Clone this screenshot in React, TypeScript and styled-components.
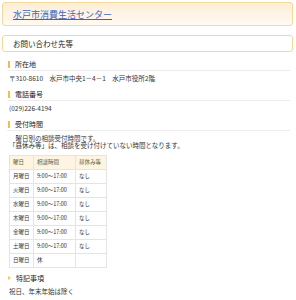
import React from "react";
import styled, { createGlobalStyle } from "styled-components";

const Global = createGlobalStyle`
  html, body { margin: 0; padding: 0; background: #fff; }
  body {
    font-family: "Noto Sans CJK JP", "Noto Sans", sans-serif;
    color: #333;
    -webkit-font-smoothing: antialiased;
  }
`;

const Page = styled.div`
  width: 296px;
  padding: 2px 3px 0 2px;
  box-sizing: border-box;
`;

const TitleBox = styled.header`
  height: 24px;
  box-sizing: border-box;
  border: 1px solid #f6d899;
  border-radius: 3px;
  background: linear-gradient(#fdeed6, #fffaf2);
  display: flex;
  align-items: center;
  padding-left: 10px;
`;

const TitleLink = styled.a`
  font-size: 9px;
  color: #3c63c0;
  text-decoration: underline;
`;

const SubBox = styled.div`
  margin-top: 9px;
  height: 17px;
  box-sizing: border-box;
  border: 1px solid #f6d899;
  border-radius: 3px;
  background: #fff;
  display: flex;
  align-items: center;
  padding-left: 10px;
  font-size: 7.5px;
  color: #222;
`;

const Content = styled.div`
  margin: 6px 3px 0 5px;
`;

const Heading = styled.h3`
  margin: 0;
  height: 13px;
  box-sizing: border-box;
  display: flex;
  align-items: center;
  gap: 5px;
  padding-left: 1px;
  border-bottom: 1px solid #ececec;
  font-size: 7px;
  font-weight: normal;
  color: #222;
  &::before {
    content: "";
    width: 2px;
    height: 7px;
    background: #f7bb48;
  }
`;

const Body = styled.div<{ $pb?: number }>`
  padding: 4px 2px ${(p) => p.$pb ?? 6}px;
  font-size: 6.5px;
  line-height: 7px;
  color: #333;
`;

const Lines = styled.div`
  display: flex;
  flex-direction: column;
  gap: 0;
`;

const Line = styled.div<{ $indent?: boolean }>`
  height: 7px;
  line-height: 7px;
  white-space: nowrap;
  padding-left: ${(p) => (p.$indent ? "6.5px" : "0")};
`;

const Table = styled.table`
  border-collapse: collapse;
  table-layout: fixed;
  width: 97px;
  margin-top: 6px;
  font-size: 5.5px;
  line-height: 7px;
  color: #333;
  td, th {
    border: 1px solid #e4e4e4;
    height: 13px;
    padding: 0 3px;
    text-align: left;
    font-weight: normal;
    white-space: nowrap;
    overflow: hidden;
  }
  th { background: #fdf5e1; color: #6b5a3a; }
`;

const Col = styled.col<{ $w: number }>`
  width: ${(p) => p.$w}px;
`;

const SubHeading = styled.h4`
  margin: 0;
  height: 13px;
  display: flex;
  align-items: center;
  gap: 5px;
  padding-left: 1px;
  font-size: 7px;
  font-weight: normal;
  color: #222;
  &::before {
    content: "";
    width: 0;
    height: 0;
    border-top: 2.5px solid transparent;
    border-bottom: 2.5px solid transparent;
    border-left: 3px solid #f7c36a;
  }
`;

const rows: [string, string, string][] = [
  ["月曜日", "9:00～17:00", "なし"],
  ["火曜日", "9:00～17:00", "なし"],
  ["水曜日", "9:00～17:00", "なし"],
  ["木曜日", "9:00～17:00", "なし"],
  ["金曜日", "9:00～17:00", "なし"],
  ["土曜日", "9:00～17:00", "なし"],
  ["日曜日", "休", ""],
];

export default function App() {
  return (
    <>
      <Global />
      <Page>
        <TitleBox>
          <TitleLink href="#">水戸市消費生活センター</TitleLink>
        </TitleBox>
        <SubBox>お問い合わせ先等</SubBox>
        <Content>
          <Heading>所在地</Heading>
          <Body>〒310-8610　水戸市中央1－4－1　水戸市役所2階</Body>
          <Heading>電話番号</Heading>
          <Body>(029)226-4194</Body>
          <Heading>受付時間</Heading>
          <Body $pb={3}>
            <Lines>
              <Line $indent>曜日別の相談受付時間です。</Line>
              <Line>「昼休み等」は、相談を受け付けていない時間となります。</Line>
            </Lines>
            <Table>
              <colgroup>
                <Col $w={24} />
                <Col $w={42} />
                <Col $w={31} />
              </colgroup>
              <thead>
                <tr>
                  <th>曜日</th>
                  <th>相談時間</th>
                  <th>昼休み等</th>
                </tr>
              </thead>
              <tbody>
                {rows.map((r) => (
                  <tr key={r[0]}>
                    <td>{r[0]}</td>
                    <td>{r[1]}</td>
                    <td>{r[2]}</td>
                  </tr>
                ))}
              </tbody>
            </Table>
          </Body>
          <SubHeading>特記事項</SubHeading>
          <Body>祝日、年末年始は除く</Body>
        </Content>
      </Page>
    </>
  );
}
